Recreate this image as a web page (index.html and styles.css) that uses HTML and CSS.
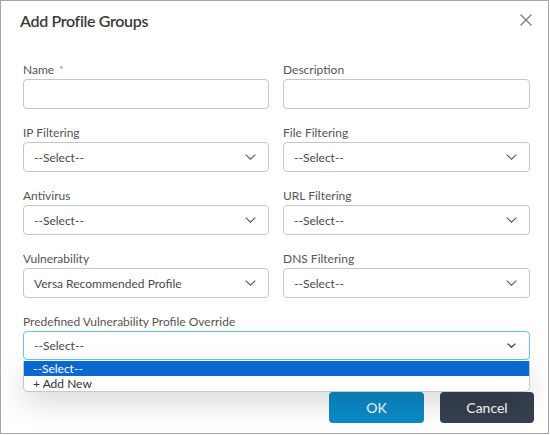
FILE: index.html
```html
<!DOCTYPE html>
<html>
<head>
<meta charset="utf-8">
<link rel="stylesheet" href="styles.css">
</head>
<body>
<div class="dialog">
  <div class="header">
    <h1 class="title">Add Profile Groups</h1>
    <button class="close" aria-label="Close">
      <svg width="12" height="12" viewBox="0 0 12 12"><path d="M0.5 0.5 L11.5 11.5 M11.5 0.5 L0.5 11.5" stroke="#777" stroke-width="1.2" fill="none"/></svg>
    </button>
  </div>
  <div class="form">
    <div class="field">
      <label class="label">Name <span class="req">*</span></label>
      <div class="input"></div>
    </div>
    <div class="field">
      <label class="label">Description</label>
      <div class="input"></div>
    </div>
    <div class="field">
      <label class="label">IP Filtering</label>
      <div class="select"><span>--Select--</span><svg class="chev" width="11" height="6" viewBox="0 0 11 6"><path d="M0.7 0.7 L5.5 5.2 L10.3 0.7" stroke="#555a62" stroke-width="1.15" fill="none"/></svg></div>
    </div>
    <div class="field">
      <label class="label">File Filtering</label>
      <div class="select"><span>--Select--</span><svg class="chev" width="11" height="6" viewBox="0 0 11 6"><path d="M0.7 0.7 L5.5 5.2 L10.3 0.7" stroke="#555a62" stroke-width="1.15" fill="none"/></svg></div>
    </div>
    <div class="field">
      <label class="label">Antivirus</label>
      <div class="select"><span>--Select--</span><svg class="chev" width="11" height="6" viewBox="0 0 11 6"><path d="M0.7 0.7 L5.5 5.2 L10.3 0.7" stroke="#555a62" stroke-width="1.15" fill="none"/></svg></div>
    </div>
    <div class="field">
      <label class="label">URL Filtering</label>
      <div class="select"><span>--Select--</span><svg class="chev" width="11" height="6" viewBox="0 0 11 6"><path d="M0.7 0.7 L5.5 5.2 L10.3 0.7" stroke="#555a62" stroke-width="1.15" fill="none"/></svg></div>
    </div>
    <div class="field">
      <label class="label">Vulnerability</label>
      <div class="select"><span>Versa Recommended Profile</span><svg class="chev" width="11" height="6" viewBox="0 0 11 6"><path d="M0.7 0.7 L5.5 5.2 L10.3 0.7" stroke="#555a62" stroke-width="1.15" fill="none"/></svg></div>
    </div>
    <div class="field">
      <label class="label">DNS Filtering</label>
      <div class="select"><span>--Select--</span><svg class="chev" width="11" height="6" viewBox="0 0 11 6"><path d="M0.7 0.7 L5.5 5.2 L10.3 0.7" stroke="#555a62" stroke-width="1.15" fill="none"/></svg></div>
    </div>
    <div class="field wide">
      <label class="label">Predefined Vulnerability Profile Override</label>
      <div class="select focused"><span>--Select--</span><svg class="chev small" width="9" height="5" viewBox="0 0 9 5"><path d="M0.6 0.6 L4.5 4.3 L8.4 0.6" stroke="#3a404b" stroke-width="1.3" fill="none"/></svg></div>
      <ul class="menu">
        <li class="item active">--Select--</li>
        <li class="item">+ Add New</li>
      </ul>
    </div>
  </div>
  <div class="footer">
    <button class="btn ok">OK</button>
    <button class="btn cancel">Cancel</button>
  </div>
</div>
</body>
</html>
```

FILE: styles.css
```css
* { box-sizing: border-box; }
html, body { margin: 0; padding: 0; background: #ffffff; }
body { font-family: Lato, "Noto Sans", sans-serif; color: #555; }

.dialog {
  width: 549px;
  height: 434px;
  border: 1px solid #a6a6a6;
  background: #fff;
  position: relative;
}

.header {
  height: 61px;
  display: flex;
  justify-content: space-between;
  align-items: flex-start;
  padding: 10px 16px 0 19px;
}
.title {
  margin: 0;
  font-size: 16px;
  line-height: 20px;
  font-weight: 600;
  color: #3a3a3a;
  letter-spacing: -0.35px;
}
.close {
  border: 0;
  background: none;
  padding: 0;
  margin-top: 3px;
  width: 12px;
  height: 12px;
  display: block;
}
.close svg { display: block; }

.form {
  display: grid;
  grid-template-columns: 246px 247px;
  column-gap: 14px;
  row-gap: 16px;
  padding-left: 22px;
}
.field { position: relative; display: flex; flex-direction: column; }
.field.wide { grid-column: 1 / 3; }

.label {
  font-size: 12px;
  line-height: 16px;
  color: #555;
  margin-bottom: 1px;
}
.req { color: #e46a6a; font-size: 10px; margin-left: 2px; position: relative; top: -1px; }

.input, .select {
  height: 30px;
  border: 1px solid #c6c6c6;
  border-radius: 4px;
  background: #fff;
}
.select {
  display: flex;
  align-items: center;
  justify-content: space-between;
  padding: 0 12px 0 10px;
  font-size: 12px;
  color: #4a4a4a;
}
.chev { display: block; }
.select.focused {
  border-color: #66c4ec;
  height: 29px;
  padding-right: 13px;
}

.menu {
  position: absolute;
  left: 0;
  right: 0;
  top: 47px;
  margin: 0;
  padding: 0;
  list-style: none;
  background: #fff;
  border: 1px solid #c8c8c8;
  border-top: 0;
  border-radius: 0 0 5px 5px;
  box-shadow: 0 10px 30px rgba(0, 0, 0, 0.16);
  z-index: 5;
  overflow: hidden;
}
.item {
  height: 15px;
  line-height: 15px;
  font-size: 12px;
  padding-left: 9px;
  color: #333;
}
.item.active { background: #0a68cf; color: #fff; }

.footer {
  display: flex;
  justify-content: flex-end;
  gap: 16px;
  padding-right: 14px;
  margin-top: 32px;
}
.btn {
  height: 31px;
  border: 0;
  border-radius: 4px;
  color: #fff;
  font-family: Lato, "Noto Sans", sans-serif;
  font-size: 14px;
  padding: 0;
}
.ok { width: 95px; background: #0b8ac6; }
.cancel { width: 94px; background: #36404e; }
```
